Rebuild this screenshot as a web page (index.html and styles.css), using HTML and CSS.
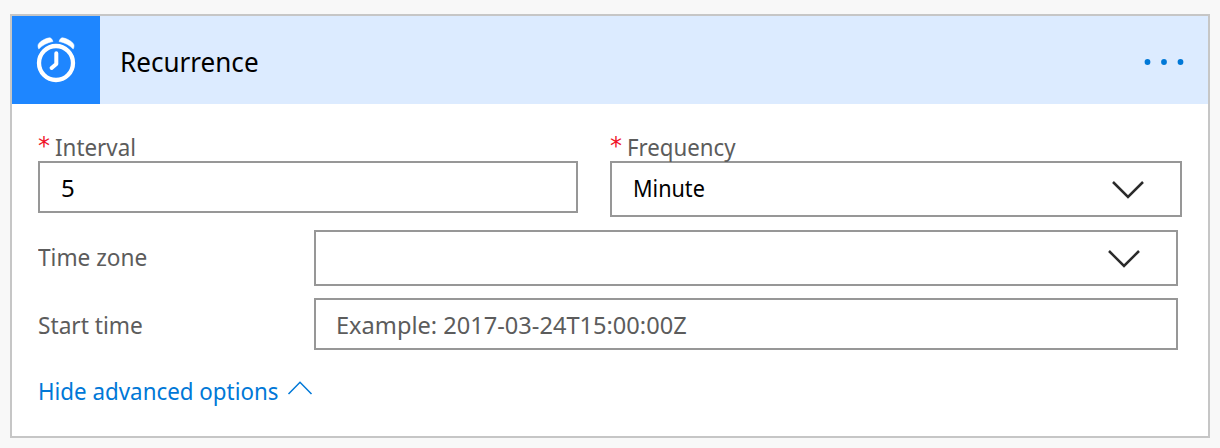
FILE: index.html
```html
<!DOCTYPE html>
<html lang="en">
<head>
<meta charset="utf-8">
<title>Recurrence</title>
<link rel="stylesheet" href="styles.css">
</head>
<body>
<main class="card">
  <header class="card-header">
    <div class="card-icon">
      <svg width="88" height="88" viewBox="0 0 88 88" fill="none" stroke="#fff">
        <circle cx="44" cy="47" r="17" stroke-width="4.300"/>
        <path d="M44.300 37.200v10.800l-4.700 4" stroke-width="4" stroke-linecap="round" stroke-linejoin="round"/>
        <path d="M26.800 33c-1.200-2.200-1.100-4.400.2-5.800 3-3 7-5 10.400-5.400 1.600-.1 2.600 1.200 3.600 3.700-6.400 1.300-10.200 3.500-14.200 7.500z" fill="#fff" stroke-width=".5"/>
        <path d="M61.200 33c1.200-2.200 1.100-4.400-.2-5.800-3-3-7-5-10.400-5.400-1.600-.1-2.600 1.200-3.600 3.700 6.400 1.300 10.200 3.500 14.200 7.500z" fill="#fff" stroke-width=".5"/>
      </svg>
    </div>
    <h1 class="card-title"><span class="text t-title">Recurrence</span></h1>
    <svg class="more" width="42" height="8" viewBox="0 0 42 8" fill="#0078d7">
      <circle cx="4.500" cy="4" r="2.900"/><circle cx="21" cy="4" r="2.900"/><circle cx="37.500" cy="4" r="2.900"/>
    </svg>
  </header>
  <div class="card-body">
    <div class="pair">
      <div class="field">
        <div class="label"><span class="required">*</span><span class="text t-interval">Interval</span></div>
        <div class="box input"><span>5</span></div>
      </div>
      <div class="field">
        <div class="label"><span class="required">*</span><span class="text t-frequency">Frequency</span></div>
        <div class="box select"><span class="text t-minute">Minute</span>
          <svg class="chevron" width="34" height="20" viewBox="0 0 34 20" fill="none" stroke="#2b2b2b" stroke-width="2.500"><path d="M2 2l15 15 15-15"/></svg>
        </div>
      </div>
    </div>
    <div class="row zone">
      <div class="label"><span class="text t-zone">Time zone</span></div>
      <div class="box select">
        <svg class="chevron" width="34" height="20" viewBox="0 0 34 20" fill="none" stroke="#2b2b2b" stroke-width="2.500"><path d="M2 2l15 15 15-15"/></svg>
      </div>
    </div>
    <div class="row start">
      <div class="label"><span class="text t-start">Start time</span></div>
      <div class="box input placeholder"><span class="text t-example">Example: 2017-03-24T15:00:00Z</span></div>
    </div>
    <a class="advanced"><span class="text t-hide">Hide advanced options</span>
      <svg width="26" height="16" viewBox="0 0 26 16" fill="none" stroke="#0078d7" stroke-width="1.500"><path d="M1.500 14L13 2.200 24.500 14"/></svg>
    </a>
  </div>
</main>
</body>
</html>
```
FILE: styles.css
```css
* { box-sizing: border-box; }
body {
  margin: 0;
  padding: 14px 10px 10px;
  background: #f8f8f8;
  font-family: "Noto Sans", sans-serif;
  font-size: 24px;
  line-height: 34px;
  color: #000;
  white-space: nowrap;
}
svg { display: block; flex: none; }
.card { height: 424px; border: 2px solid #c6c6c6; background: #fff; }
.card-header { display: flex; align-items: center; height: 88px; background: #dcebff; padding-right: 23px; }
.card-icon { width: 88px; height: 88px; background: #1e86ff; }
.card-title { flex: 1; margin: 0; padding: 2px 0 0 20px; font-size: 28px; font-weight: 400; }
.more { margin-top: 4px; }
.card-body { padding: 26px 26px 0; }
.pair { display: grid; grid-template-columns: 540px 572px; column-gap: 32px; height: 100px; }
.label { color: #5c5c5c; }
.field .label { display: flex; height: 31px; line-height: 33px; }
.required { width: 17px; color: #f01428; font-family: "DejaVu Sans", sans-serif; }
.box { display: flex; align-items: center; border: 2px solid #979797; background: #fff; }
.input { height: 52px; padding: 2px 21px 0; }
.select { height: 56px; justify-content: space-between; padding: 0 35px 0 21px; }
.select > span { margin-top: -2px; }
.chevron { margin: 2px 0 0 auto; }
.row { display: grid; grid-template-columns: 276px 864px; align-items: center; }
.zone .label { padding-bottom: 2px; }
.start { margin-top: 12px; }
.start .label { padding-top: 1px; }
.placeholder { padding-top: 1px; padding-left: 20px; color: #5c5c5c; }
.advanced { display: flex; gap: 9px; margin-top: 24px; color: #0078d7; }
.advanced svg { margin-top: 6px; }

/* Slightly condensed lettering */
.text { display: inline-block; transform-origin: 0 50%; }
.t-title { transform: scaleX(.931); }
.t-interval { transform: scaleX(.932); }
.t-frequency { transform: scaleX(.927); }
.t-minute { transform: scaleX(.9); }
.t-zone { transform: scaleX(.943); }
.t-start { transform: scaleX(.945); }
.t-example { transform: scaleX(.983); }
.t-hide { transform: scaleX(.931); margin-right: -18px; }
```
